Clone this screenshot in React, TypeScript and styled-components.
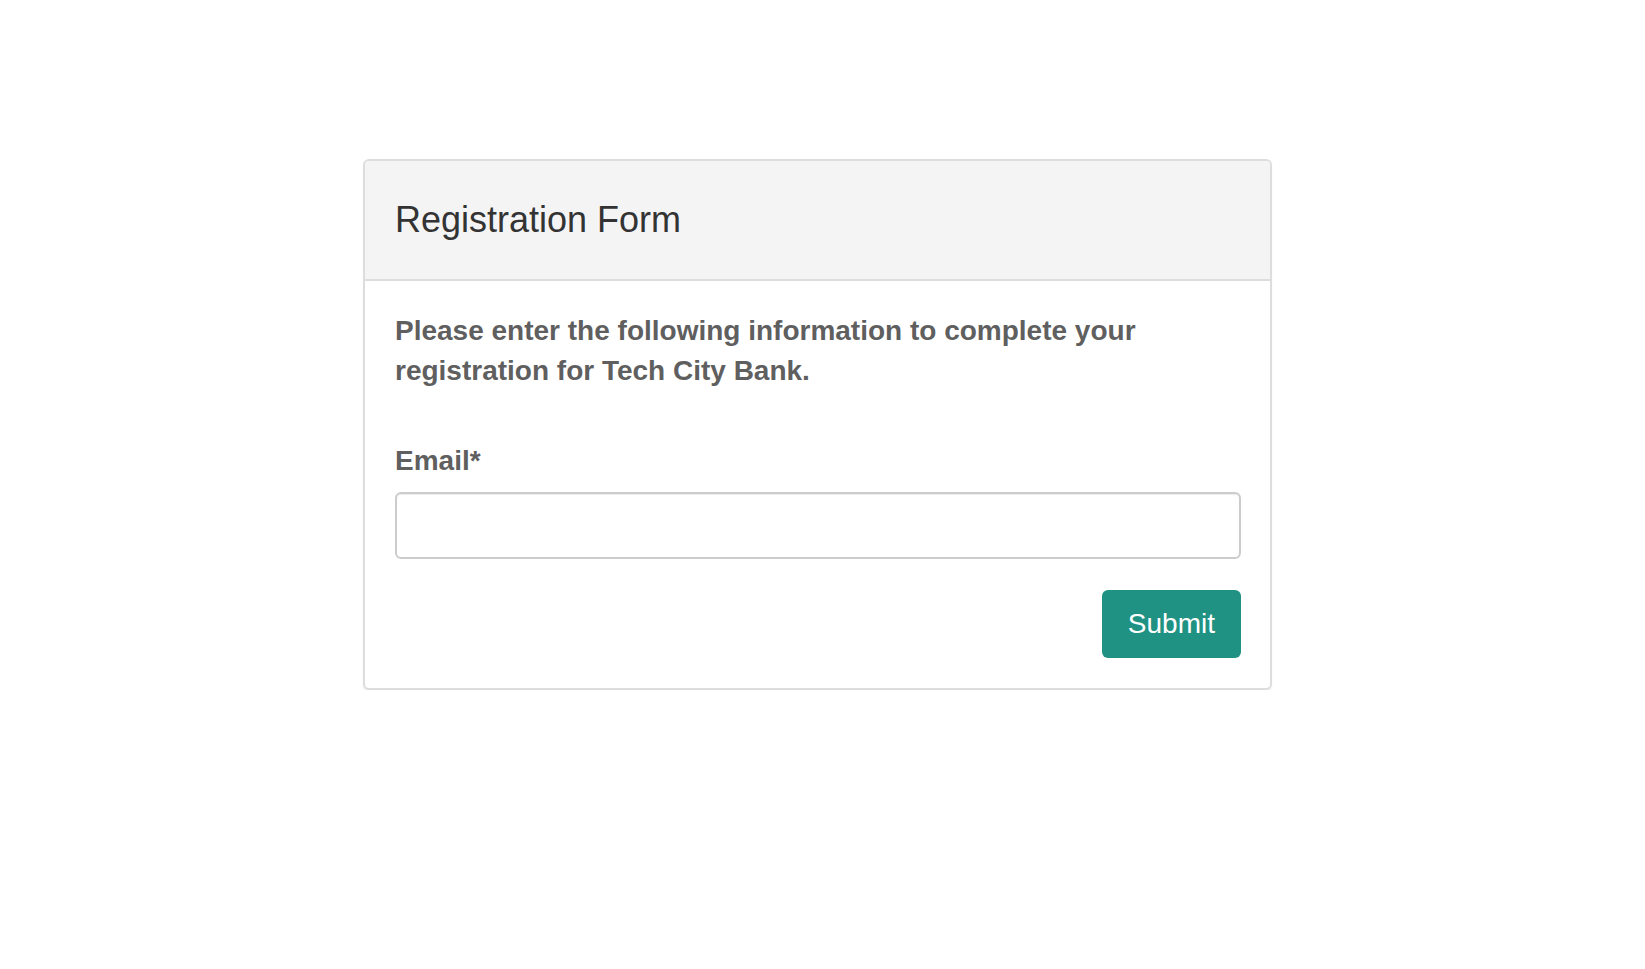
import React from "react";
import styled, { createGlobalStyle } from "styled-components";

const GlobalStyle = createGlobalStyle`
  html, body {
    margin: 0;
    padding: 0;
    background: #ffffff;
    font-family: "Liberation Sans", Arial, sans-serif;
  }
  * {
    box-sizing: border-box;
  }
`;

const Page = styled.div`
  display: flex;
  justify-content: center;
  padding: 159px 10px 0 0;
`;

const Card = styled.div`
  width: 909px;
  border: 2px solid #dddddd;
  border-radius: 6px;
  background: #ffffff;
  box-shadow: 0 2px 2px rgba(0, 0, 0, 0.06);
  overflow: hidden;
`;

const CardHeader = styled.div`
  display: flex;
  align-items: center;
  height: 120px;
  padding: 0 30px;
  background: #f4f4f4;
  border-bottom: 2px solid #dddddd;
`;

const Title = styled.h3`
  margin: 0;
  font-size: 36px;
  font-weight: 400;
  line-height: 1.1;
  color: #333333;
`;

const CardBody = styled.div`
  padding: 30px 29px 30px 30px;
`;

const Intro = styled.p`
  margin: 0 0 50px;
  font-size: 28px;
  font-weight: 700;
  line-height: 40px;
  color: #5f5f5f;
`;

const Label = styled.label`
  display: block;
  margin-bottom: 12px;
  font-size: 28px;
  font-weight: 700;
  line-height: 39px;
  color: #5f5f5f;
`;

const Input = styled.input`
  display: block;
  width: 100%;
  height: 67px;
  padding: 0 18px;
  font-family: inherit;
  font-size: 28px;
  color: #555555;
  border: 2px solid #cccccc;
  border-radius: 6px;
  box-shadow: inset 0 1px 1px rgba(0, 0, 0, 0.075);
  outline: none;
`;

const Actions = styled.div`
  display: flex;
  justify-content: flex-end;
  margin-top: 31px;
`;

const Button = styled.button`
  height: 68px;
  padding: 0 26px;
  font-family: inherit;
  font-size: 28px;
  color: #ffffff;
  background: #209283;
  border: none;
  border-radius: 6px;
  cursor: pointer;
`;

const App: React.FC = () => {
  return (
    <>
      <GlobalStyle />
      <Page>
        <Card>
          <CardHeader>
            <Title>Registration Form</Title>
          </CardHeader>
          <CardBody>
            <Intro>
              Please enter the following information to complete your
              registration for Tech City Bank.
            </Intro>
            <Label htmlFor="email">Email*</Label>
            <Input id="email" type="email" />
            <Actions>
              <Button type="submit">Submit</Button>
            </Actions>
          </CardBody>
        </Card>
      </Page>
    </>
  );
};

export default App;
